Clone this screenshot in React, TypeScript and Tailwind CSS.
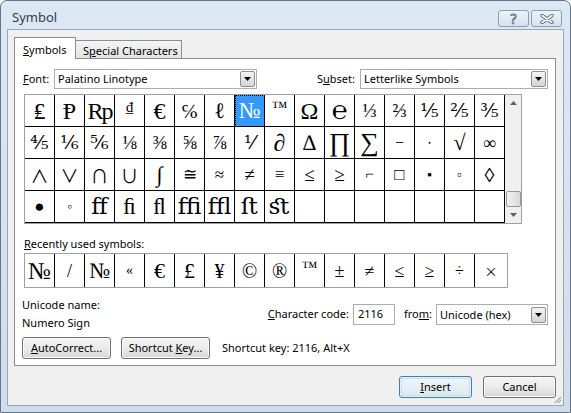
import type { ReactNode } from "react";

type Glyph = { ch: string; cls?: string; sel?: boolean };

const serif = "font-['Liberation_Serif','DejaVu_Serif',serif]";
const thin = "font-['Noto_Sans_CJK_JP','DejaVu_Sans',sans-serif]";

const rows: Glyph[][] = [
  [
    { ch: "₤" },
    { ch: "Ᵽ" },
    { ch: "Rp", cls: "text-[24px] tracking-[-2px]" },
    { ch: "₫", cls: "text-[15px] mb-[6px]" },
    { ch: "€" },
    { ch: "℅", cls: "text-[20px]" },
    { ch: "ℓ", cls: "text-[22px]" },
    { ch: "№", cls: "text-[23px]", sel: true },
    { ch: "™", cls: "text-[16px] mb-[8px]" },
    { ch: "Ω" },
    { ch: "℮", cls: "text-[26px]" },
    { ch: "⅓", cls: "text-[19px]" },
    { ch: "⅔", cls: "text-[19px]" },
    { ch: "⅕", cls: "text-[19px]" },
    { ch: "⅖", cls: "text-[19px]" },
    { ch: "⅗", cls: "text-[19px]" },
  ],
  [
    { ch: "⅘", cls: "text-[19px]" },
    { ch: "⅙", cls: "text-[19px]" },
    { ch: "⅚", cls: "text-[19px]" },
    { ch: "⅛", cls: "text-[19px]" },
    { ch: "⅜", cls: "text-[19px]" },
    { ch: "⅝", cls: "text-[19px]" },
    { ch: "⅞", cls: "text-[19px]" },
    { ch: "⅟", cls: "text-[19px]" },
    { ch: "∂" },
    { ch: "∆", cls: "text-[22px]" },
    { ch: "∏", cls: "text-[26px]" },
    { ch: "∑", cls: "text-[26px]" },
    { ch: "−", cls: "text-[16px]" },
    { ch: "∙", cls: "text-[16px]" },
    { ch: "√", cls: "text-[22px]" },
    { ch: "∞", cls: "text-[18px]" },
  ],
  [
    { ch: "∧", cls: `text-[18px] ${thin}` },
    { ch: "∨", cls: `text-[18px] ${thin}` },
    { ch: "∩", cls: `text-[18px] ${thin}` },
    { ch: "∪", cls: `text-[18px] ${thin}` },
    { ch: "∫", cls: "text-[22px]" },
    { ch: "≅", cls: "text-[17px]" },
    { ch: "≈", cls: "text-[17px]" },
    { ch: "≠", cls: "text-[19px]" },
    { ch: "≡", cls: "text-[17px]" },
    { ch: "≤", cls: "text-[19px]" },
    { ch: "≥", cls: "text-[19px]" },
    { ch: "⌐", cls: "text-[15px]" },
    { ch: "□", cls: "text-[17px]" },
    { ch: "▪", cls: "text-[13px]" },
    { ch: "▫", cls: "text-[13px]" },
    { ch: "◊", cls: "text-[20px]" },
  ],
  [
    { ch: "●", cls: "text-[17px]" },
    { ch: "◦", cls: "text-[14px]" },
    { ch: "ﬀ", cls: "text-[23px]" },
    { ch: "ﬁ", cls: "text-[23px]" },
    { ch: "ﬂ", cls: "text-[23px]" },
    { ch: "ﬃ", cls: "text-[23px]" },
    { ch: "ﬄ", cls: "text-[23px]" },
    { ch: "ﬅ", cls: "text-[23px]" },
    { ch: "ﬆ", cls: "text-[23px]" },
    { ch: "" },
    { ch: "" },
    { ch: "" },
    { ch: "" },
    { ch: "" },
    { ch: "" },
    { ch: "" },
  ],
];

const recent: Glyph[] = [
  { ch: "№", cls: "text-[24px]" },
  { ch: "/", cls: "text-[18px]" },
  { ch: "№", cls: "text-[22px]" },
  { ch: "«", cls: "text-[14px]" },
  { ch: "€", cls: "text-[22px]" },
  { ch: "£", cls: "text-[22px]" },
  { ch: "¥", cls: "text-[20px]" },
  { ch: "©", cls: "text-[20px]" },
  { ch: "®", cls: "text-[20px]" },
  { ch: "™", cls: "text-[16px] mb-[8px]" },
  { ch: "±", cls: "text-[18px]" },
  { ch: "≠", cls: "text-[18px]" },
  { ch: "≤", cls: "text-[18px]" },
  { ch: "≥", cls: "text-[18px]" },
  { ch: "÷", cls: "text-[16px]" },
  { ch: "×", cls: `text-[13px] ${thin}` },
];

function Arrow() {
  return (
    <svg width="7" height="4" viewBox="0 0 7 4">
      <path d="M0 0h7L3.5 4z" fill="#000" />
    </svg>
  );
}

function Combo({ value, className }: { value: string; className: string }) {
  return (
    <div className={`flex h-[20px] items-center border border-[#abadb3] bg-white pl-[3px] ${className}`}>
      <span className="flex-1 truncate leading-[14px]">{value}</span>
      <div className="m-px flex h-[16px] w-[15px] items-center justify-center rounded-[2px] border border-[#8e8f8f] bg-linear-to-b from-[#f4f4f4] to-[#d4d4d4]">
        <Arrow />
      </div>
    </div>
  );
}

function Btn({ children, w, primary }: { children: ReactNode; w: string; primary?: boolean }) {
  const base = primary
    ? "border-[#3c7fb1] shadow-[inset_0_0_0_1px_#e4f3fc,inset_0_0_0_2px_#c4e2f4] from-[#f2f8fc] to-[#dbe6ee]"
    : "border-[#707070] shadow-[inset_0_0_0_1px_#fbfbfb] from-[#f4f4f4] via-[#ebebeb] to-[#d6d6d6]";
  return (
    <button type="button" className={`flex h-[22px] items-center justify-center whitespace-nowrap rounded-[3px] border bg-linear-to-b text-[11px] text-black ${base} ${w}`}>
      {children}
    </button>
  );
}

function Cell({ g }: { g: Glyph }) {
  return (
    <div
      className={`flex h-[32px] w-[30px] items-center justify-center overflow-visible whitespace-nowrap border-r border-b border-black leading-none ${
        g.sel ? "bg-[#3399ff] text-white outline-1 outline-dotted outline-black -outline-offset-1" : "text-black"
      }`}
    >
      <span className={`${serif} ${g.cls ?? "text-[24px]"}`}>{g.ch}</span>
    </div>
  );
}

export default function App() {
  return (
    <div className="h-[413px] w-[571px] bg-white">
      <div className="relative flex h-[413px] w-[571px] flex-col rounded-t-[7px] border border-[#65758a] bg-linear-to-b from-[#dde8f5] to-[#cfdcec] font-['Noto_Sans',sans-serif] text-[11px] text-black">
        {/* title bar */}
        <div className="flex h-[28px] items-start justify-between pl-[11px] pr-[8px]">
          <span className="mt-[7px] text-[13px] leading-[18px] text-[#333d4a]">Symbol</span>
          <div className="mt-[9px] flex gap-[2px]">
            <div className="flex h-[17px] w-[31px] items-center justify-center rounded-[3px] border border-[#8d9db2] bg-linear-to-b from-[#eef3f9] to-[#d6e1ef]">
              <span className="text-[14px] leading-none text-white [-webkit-text-stroke:0.8px_#5b6a80]">?</span>
            </div>
            <div className="flex h-[17px] w-[31px] items-center justify-center rounded-[3px] border border-[#8d9db2] bg-linear-to-b from-[#eef3f9] to-[#d6e1ef]">
              <svg width="14" height="10" viewBox="0 0 14 10">
                <path d="M2 1.5l10 7M12 1.5l-10 7" stroke="#5b6a80" strokeWidth="3.4" strokeLinecap="round" />
                <path d="M2 1.5l10 7M12 1.5l-10 7" stroke="#fff" strokeWidth="1.6" strokeLinecap="round" />
              </svg>
            </div>
          </div>
        </div>

        {/* client area */}
        <div className="relative mx-[6px] mb-[6px] flex flex-1 flex-col border border-[#97a8bd] bg-[#f0f0f0]">
          {/* tabs */}
          <div className="ml-[6px] mt-[7px] flex h-[22px] items-end whitespace-nowrap">
            <div className="relative z-10 flex h-[22px] w-[62px] items-start border border-b-0 border-[#898c95] bg-white pl-[8px] pt-[4px]">
              <span>
                <u>S</u>ymbols
              </span>
            </div>
            <div className="mb-px flex h-[18px] w-[106px] items-start border border-b-0 border-l-0 border-[#898c95] bg-linear-to-b from-[#f5f5f5] to-[#e3e3e3] pl-[7px] pt-[2px]">
              <span>
                S<u>p</u>ecial Characters
              </span>
            </div>
          </div>

          {/* panel */}
          <div className="relative ml-[6px] mt-[-1px] flex h-[308px] w-[542px] flex-col border border-[#898c95] bg-white">
            {/* font / subset */}
            <div className="mt-[10px] flex h-[20px] items-center whitespace-nowrap pl-[8px] pr-[7px]">
              <span className="w-[31px]">
                <u>F</u>ont:
              </span>
              <Combo value="Palatino Linotype" className="w-[203px]" />
              <span className="ml-auto mr-[5px]">
                S<u>u</u>bset:
              </span>
              <Combo value="Letterlike Symbols" className="w-[188px]" />
            </div>

            {/* symbol grid */}
            <div className="ml-[9px] mt-[5px] flex w-[498px] border border-[#a0a0a0]">
              <div className="flex flex-col">
                {rows.map((r, i) => (
                  <div key={i} className="flex">
                    {r.map((g, j) => (
                      <Cell key={j} g={g} />
                    ))}
                  </div>
                ))}
              </div>
              <div className="flex w-[16px] flex-col items-center bg-[#f0f0f0]">
                <div className="flex h-[16px] items-center">
                  <svg width="7" height="4" viewBox="0 0 7 4">
                    <path d="M0 4h7L3.5 0z" fill="#606060" />
                  </svg>
                </div>
                <div className="flex-1" />
                <div className="h-[16px] w-[15px] rounded-[2px] border border-[#979797] bg-linear-to-r from-[#f2f2f2] to-[#d9d9d9]" />
                <div className="flex h-[16px] items-center">
                  <svg width="7" height="4" viewBox="0 0 7 4">
                    <path d="M0 0h7L3.5 4z" fill="#606060" />
                  </svg>
                </div>
              </div>
            </div>

            {/* recently used */}
            <div className="ml-[9px] mt-[12px] h-[16px] leading-[16px]">
              <u>R</u>ecently used symbols:
            </div>
            <div className="ml-[9px] mt-px flex h-[35px] w-[484px] border border-[#a0a0a0]">
              {recent.map((g, i) => (
                <div
                  key={i}
                  className={`flex h-full items-center justify-center whitespace-nowrap leading-none ${
                    i === recent.length - 1 ? "flex-1" : "w-[30px] border-r border-black"
                  }`}
                >
                  <span className={`${serif} ${g.cls ?? ""}`}>{g.ch}</span>
                </div>
              ))}
            </div>

            {/* unicode name + character code */}
            <div className="mt-[9px] flex whitespace-nowrap pl-[7px] pr-[7px]">
              <div className="flex flex-col leading-[16px]">
                <span>Unicode name:</span>
                <span className="mt-[2px]">Numero Sign</span>
              </div>
              <div className="ml-auto mt-[7px] flex h-[21px] items-center">
                <span className="mr-[4px]">
                  <u>C</u>haracter code:
                </span>
                <div className="flex h-[21px] w-[42px] items-center border border-[#abadb3] bg-white pl-[4px]">2116</div>
                <span className="ml-[9px] mr-[4px]">
                  fro<u>m</u>:
                </span>
                <Combo value="Unicode (hex)" className="h-[21px] w-[112px]" />
              </div>
            </div>

            {/* autocorrect / shortcut */}
            <div className="mt-[6px] flex items-center whitespace-nowrap pl-[7px]">
              <Btn w="w-[89px]">
                <span>
                  <u>A</u>utoCorrect...
                </span>
              </Btn>
              <div className="ml-[10px]">
                <Btn w="w-[89px]">
                  <span>
                    Shortcut <u>K</u>ey...
                  </span>
                </Btn>
              </div>
              <span className="ml-[12px]">Shortcut key: 2116, Alt+X</span>
            </div>
          </div>

          {/* dialog buttons */}
          <div className="mt-[10px] flex justify-end gap-[11px] pr-[7px]">
            <Btn w="w-[73px]" primary>
              <span>
                <u>I</u>nsert
              </span>
            </Btn>
            <Btn w="w-[73px]">Cancel</Btn>
          </div>

          <svg className="absolute bottom-px right-px" width="9" height="9" viewBox="0 0 9 9">
            <path d="M8 2L2 8M8 5L5 8" stroke="#a8a8a8" strokeWidth="1.2" />
          </svg>
        </div>
      </div>
    </div>
  );
}
